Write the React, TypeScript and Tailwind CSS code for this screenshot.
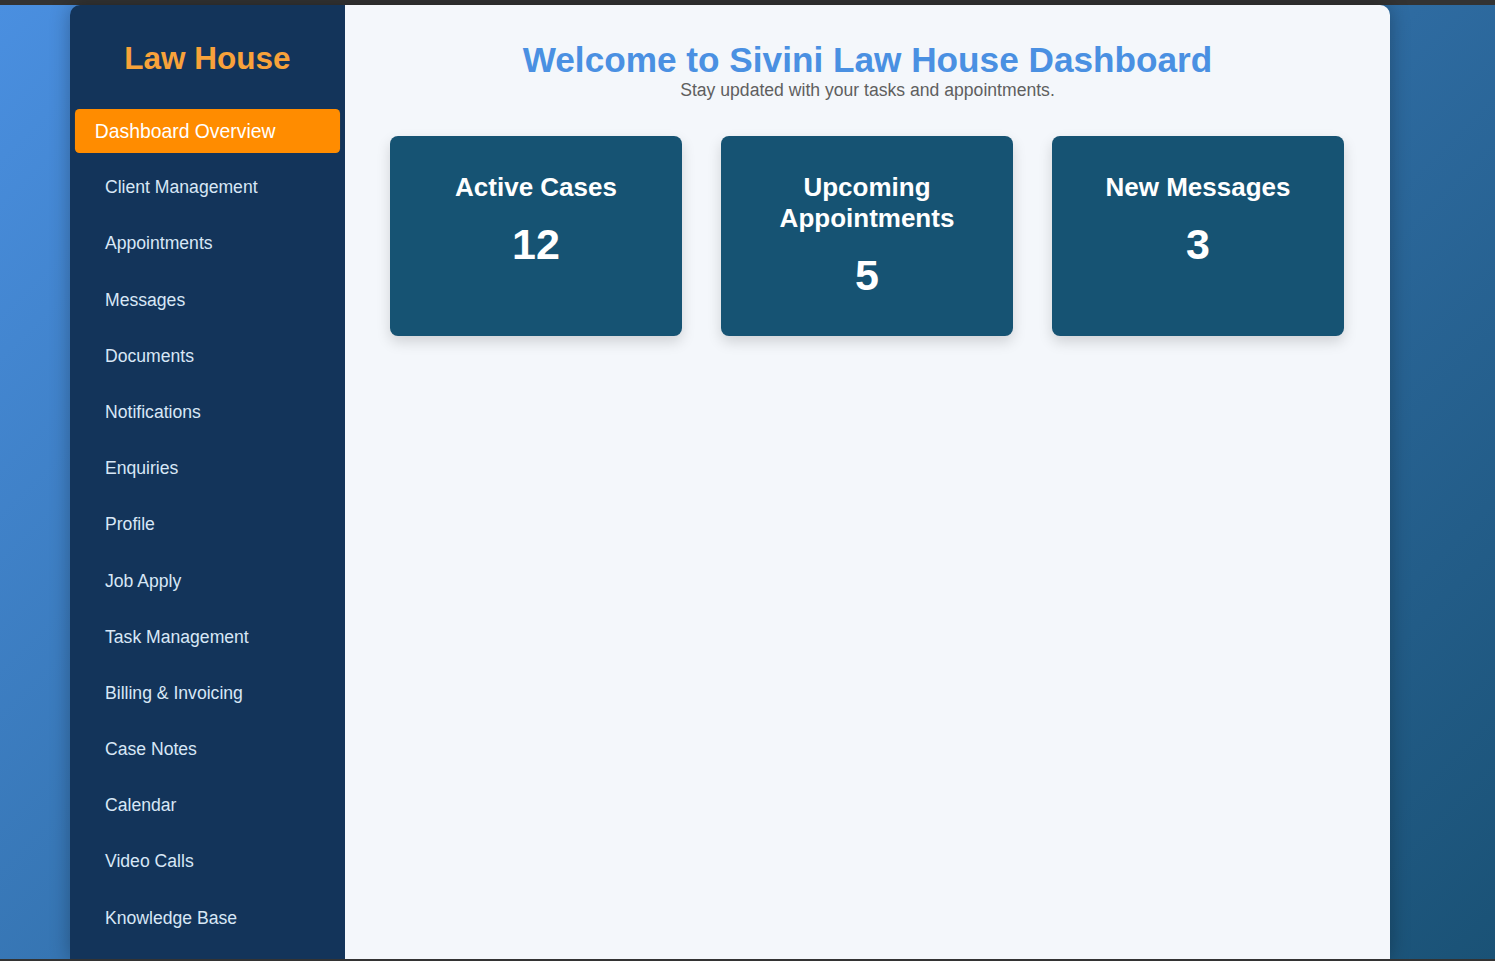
import React from "react";

const navItems = [
  "Dashboard Overview",
  "Client Management",
  "Appointments",
  "Messages",
  "Documents",
  "Notifications",
  "Enquiries",
  "Profile",
  "Job Apply",
  "Task Management",
  "Billing & Invoicing",
  "Case Notes",
  "Calendar",
  "Video Calls",
  "Knowledge Base",
];

const stats = [
  { title: "Active Cases", value: 12 },
  { title: "Upcoming Appointments", value: 5 },
  { title: "New Messages", value: 3 },
];

export default function App() {
  return (
    <div className="h-[961px] w-full overflow-hidden flex flex-col bg-[#333333] font-['Liberation_Sans',Arial,sans-serif]">
      <div className="h-[5px] shrink-0 bg-[#333333]" />
      <div className="flex-1 min-h-0 bg-linear-135 from-[#4a8fe0] to-[#1a5276]">
        <div className="ml-[70px] w-[1320px] h-full flex rounded-t-[10px] overflow-hidden shadow-[0_0_20px_rgba(0,0,0,0.3)]">
          {/* Sidebar */}
          <aside className="w-[275px] shrink-0 bg-[#13345a] px-[17px] pt-[35px]">
            <h1 className="text-center text-[31.5px] font-bold text-[#f8a23a] leading-[37px]">
              Law House
            </h1>
            <ul className="mt-[34px]">
              {navItems.map((item, i) => (
                <li
                  key={item}
                  className={
                    i === 0
                      ? "mb-[16.2px] py-[10px] pl-[18px] rounded-[4px] bg-[#ff8c00] text-white text-[17.6px] leading-[20px] scale-110"
                      : "mb-[16.2px] py-[10px] pl-[18px] text-[#d8e7f6] text-[17.6px] leading-[20px]"
                  }
                >
                  {item}
                </li>
              ))}
            </ul>
          </aside>

          {/* Main */}
          <main className="flex-1 bg-[#f4f7fb] pt-[35px] px-[45px]">
            <div className="text-center">
              <h2 className="text-[35.2px] font-bold text-[#4a90e2] leading-[40px]">
                Welcome to Sivini Law House Dashboard
              </h2>
              <p className="text-[17.6px] text-[#5f5f5f] leading-[20px]">
                Stay updated with your tasks and appointments.
              </p>
            </div>
            <div className="mt-[36px] flex gap-[39px]">
              {stats.map((s) => (
                <div
                  key={s.title}
                  className="w-[292px] h-[200px] rounded-[8px] bg-[#165373] text-white text-center px-[24px] pt-[36px] shadow-[0_6px_14px_rgba(0,0,0,0.15)]"
                >
                  <h3 className="text-[26px] font-bold leading-[31px]">{s.title}</h3>
                  <div className="mt-[17px] text-[43px] font-bold leading-[48px]">
                    {s.value}
                  </div>
                </div>
              ))}
            </div>
          </main>
        </div>
      </div>
      <div className="h-[2px] shrink-0 bg-[#333333]" />
    </div>
  );
}
